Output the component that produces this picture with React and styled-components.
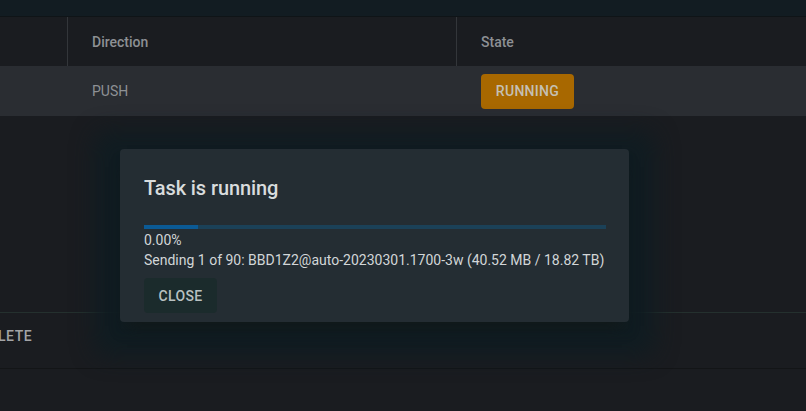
import styled, { createGlobalStyle } from "styled-components";

const GlobalStyle = createGlobalStyle`
  html, body {
    margin: 0;
    padding: 0;
    background: #1a1c20;
    font-family: Roboto, "Liberation Sans", sans-serif;
  }
`;

const App = () => {
  return (
    <Page>
      <GlobalStyle />
      <TopBar />
      <Table>
        <HeadRow>
          <HeadCell />
          <HeadCell $divider>Direction</HeadCell>
          <HeadCell $divider>State</HeadCell>
        </HeadRow>
        <BodyRow>
          <Cell />
          <Cell>PUSH</Cell>
          <Cell>
            <Chip>RUNNING</Chip>
          </Cell>
        </BodyRow>
      </Table>
      <Spacer />
      <ActionRow>
        <TextButton>DELETE</TextButton>
      </ActionRow>

      <Dialog>
        <Title>Task is running</Title>
        <Progress>
          <ProgressFill style={{ width: "11.6%" }} />
        </Progress>
        <Percent>0.00%</Percent>
        <Status>Sending 1 of 90: BBD1Z2@auto-20230301.1700-3w (40.52 MB / 18.82 TB)</Status>
        <CloseButton>CLOSE</CloseButton>
      </Dialog>
    </Page>
  );
};
export default App;

const Page = styled.div`
  position: relative;
  width: 806px;
  height: 411px;
  overflow: hidden;
  background: #1a1c20;
  display: flex;
  flex-direction: column;
`;

const TopBar = styled.div`
  height: 16px;
  background: #121c22;
  border-bottom: 1px solid #0f1417;
`;

const Table = styled.div`
  display: flex;
  flex-direction: column;
`;

const HeadRow = styled.div`
  display: grid;
  grid-template-columns: 67px 389px 1fr;
  height: 49px;
  background: #1a1c20;
`;

const HeadCell = styled.div`
  display: flex;
  align-items: center;
  padding-left: 24px;
  font-size: 14px;
  font-weight: 500;
  color: #8d9094;
  border-left: ${(p) => (p.$divider ? "1px solid #33363a" : "none")};
`;

const BodyRow = styled.div`
  display: grid;
  grid-template-columns: 67px 389px 1fr;
  height: 50px;
  background: #2a2d32;
`;

const Cell = styled.div`
  display: flex;
  align-items: center;
  padding-left: 25px;
  font-size: 14px;
  color: #8e9195;
`;

const Chip = styled.div`
  display: flex;
  align-items: center;
  justify-content: center;
  width: 93px;
  height: 35px;
  border-radius: 4px;
  background: #a86800;
  color: #c5c0b4;
  font-size: 14px;
  font-weight: 500;
  letter-spacing: 0.3px;
`;

const Spacer = styled.div`
  height: 196px;
`;

const ActionRow = styled.div`
  height: 57px;
  box-sizing: border-box;
  padding-bottom: 10px;
  display: flex;
  align-items: center;
  border-top: 1px solid #24302e;
  border-bottom: 1px solid #131517;
`;

const TextButton = styled.span`
  margin-left: -20px;
  font-size: 14px;
  font-weight: 500;
  color: #a3a4a6;
  letter-spacing: 0.5px;
`;

const Dialog = styled.div`
  position: absolute;
  left: 120px;
  top: 149px;
  width: 509px;
  height: 173px;
  box-sizing: border-box;
  padding: 26px 24px 0 24px;
  background: #242d33;
  border-radius: 4px;
  display: flex;
  flex-direction: column;
  box-shadow: 0 11px 15px -7px #111818, 0 8px 22px 26px rgba(16, 28, 34, 0.95);
`;

const Title = styled.div`
  font-size: 20px;
  font-weight: 500;
  color: #d8dcdd;
  line-height: 26px;
  letter-spacing: -0.1px;
`;

const Progress = styled.div`
  margin-top: 24px;
  height: 4px;
  width: 462px;
  background: #1b4158;
  display: flex;
`;

const ProgressFill = styled.div`
  height: 100%;
  background: #0b5a95;
`;

const Percent = styled.div`
  margin-top: 3px;
  font-size: 14px;
  line-height: 17px;
  color: #d2d6d8;
`;

const Status = styled.div`
  margin-top: 3px;
  font-size: 14px;
  line-height: 17px;
  color: #d2d6d8;
  white-space: nowrap;
`;

const CloseButton = styled.button`
  margin-top: 9px;
  width: 73px;
  height: 35px;
  border: none;
  border-radius: 4px;
  background: #1b2b2c;
  color: #b9c1c1;
  font-family: Roboto, "Liberation Sans", sans-serif;
  font-size: 14px;
  font-weight: 500;
  letter-spacing: 0.3px;
  padding: 0;
`;
